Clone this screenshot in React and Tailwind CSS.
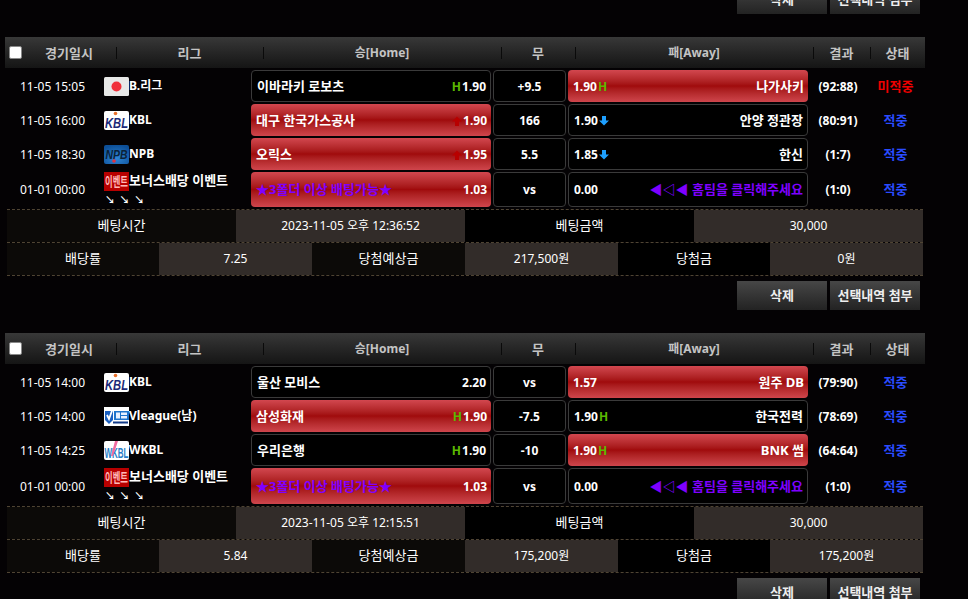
import React from "react";

const font = { fontFamily: '"Noto Sans", "Noto Sans CJK KR", sans-serif' };

const H = () => <span className="text-[#5cb800] font-bold text-[12px] leading-none">H</span>;

const Up = () => (
  <svg width="10" height="10" viewBox="0 0 10 10" className="inline-block">
    <path d="M5 0.5 L10 5.5 H7 V10 H3 V5.5 H0 Z" fill="#b80000" />
  </svg>
);

const Down = () => (
  <svg width="10" height="10" viewBox="0 0 10 10" className="inline-block">
    <path d="M5 9.5 L10 4.5 H7 V0 H3 V4.5 H0 Z" fill="#1ea0ff" />
  </svg>
);

// small league logos
const Logo = ({ type }) => {
  if (type === "jp")
    return (
      <svg width="25" height="19" viewBox="0 0 25 19" className="shrink-0">
        <rect width="25" height="19" rx="1.5" fill="#e8e8e8" />
        <circle cx="12.5" cy="9.5" r="5" fill="#f0303a" />
      </svg>
    );
  if (type === "kbl")
    return (
      <svg width="25" height="19" viewBox="0 0 25 19" className="shrink-0">
        <rect width="25" height="19" rx="2" fill="#fff" />
        <circle cx="11.5" cy="2.5" r="1.8" fill="#e8702a" />
        <text x="1" y="17" fontSize="15" fontWeight="700" fontStyle="italic" fill="#1c2a78" fontFamily="Liberation Sans" textLength="23" lengthAdjust="spacingAndGlyphs">KBL</text>
      </svg>
    );
  if (type === "npb")
    return (
      <svg width="25" height="19" viewBox="0 0 25 19" className="shrink-0">
        <defs>
          <radialGradient id="npbg" cx="0.5" cy="0.7" r="0.7">
            <stop offset="0" stopColor="#2f86d6" />
            <stop offset="1" stopColor="#0d4f98" />
          </radialGradient>
        </defs>
        <rect width="25" height="19" rx="2" fill="url(#npbg)" />
        <text x="1.5" y="13.5" fontSize="13" fontStyle="italic" fill="#0b2238" fontFamily="Liberation Sans" textLength="22" lengthAdjust="spacingAndGlyphs">NPB</text>
        <circle cx="10" cy="16" r="1.8" fill="#e03040" />
      </svg>
    );
  if (type === "event")
    return (
      <svg width="25" height="19" viewBox="0 0 25 19" className="shrink-0">
        <rect width="25" height="19" fill="#b80000" />
        <text x="1" y="14" fontSize="13" fontWeight="700" fill="#ffb8b8" fontFamily="Noto Sans CJK KR" textLength="23" lengthAdjust="spacingAndGlyphs">이벤트</text>
      </svg>
    );
  if (type === "vl")
    return (
      <svg width="25" height="19" viewBox="0 0 25 19" className="shrink-0">
        <rect width="25" height="19" fill="#fff" />
        <path d="M1 4 H9 V13 L5 17 L1 13 Z" fill="#1a5fc0" />
        <path d="M3 8 L5 12 L9 1" stroke="#fff" strokeWidth="1.8" fill="none" />
        <rect x="10" y="4" width="15" height="9" fill="#1f74cc" />
        <rect x="12" y="5.5" width="4" height="6" fill="#e8f0ff" />
        <rect x="17" y="5.5" width="6" height="2.5" fill="#e8f0ff" />
        <rect x="17" y="9" width="6" height="2.5" fill="#e8f0ff" />
        <rect x="9" y="14.5" width="15" height="2" fill="#123a88" />
      </svg>
    );
  return (
    <svg width="25" height="19" viewBox="0 0 25 19" className="shrink-0">
      <rect width="25" height="19" rx="2" fill="#fff" />
      <text x="0.5" y="17" fontSize="14" fontWeight="700" fill="#2a80c8" fontFamily="Liberation Sans" textLength="24" lengthAdjust="spacingAndGlyphs">WKBL</text>
      <path d="M11 0 L14 0 L9 15 L7 15 Z" fill="#f06aa0" />
    </svg>
  );
};

const Side = ({ on, className = "", children }) => (
  <div
    className={`flex items-center justify-between rounded-[4px] h-full pt-[1px] text-white text-[12px] font-bold ${className} ${
      on
        ? "bg-gradient-to-b from-[#d2474f] via-[#a00a0c] to-[#cf454c]"
        : "bg-black border border-[#3a3a3a]"
    }`}
  >
    {children}
  </div>
);

const Row = ({ r }) => (
  <div className={`flex text-white text-[12px] mb-[2px] ${r.tall ? "h-[36px]" : r.event ? "h-[35px]" : "h-[32px]"}`}>
    <div className="w-[95px] pt-[1px] flex items-center justify-center">{r.date}</div>
    <div className="w-[146px] ml-[4px] mr-[1px] relative">
      <div className={`flex items-start font-bold leading-[15px] ${r.event ? "pt-0" : "pt-[7px]"}`}>
        <Logo type={r.logo} />
        <span className={`whitespace-nowrap pt-[1px] ${r.event ? "text-[13px]" : ""}`}>{r.league}</span>
      </div>
      {r.event && <div className="text-[10px] font-bold leading-[12px] tracking-[1px] pl-[1px] mt-[3px]">↘ ↘ ↘</div>}
    </div>
    <div className="w-[240px]">
      <Side on={r.homeOn} className="pl-[5px] pr-[4px]">
        <span className={`text-[13px] ${r.event ? "text-[#7f00ff]" : ""}`}>{r.home}</span>
        <span className="flex items-center gap-[1px]">
          {r.homeMark === "H" && <H />}
          {r.homeMark === "up" && <Up />}
          {r.homeOdds}
        </span>
      </Side>
    </div>
    <div className="w-[73px] mx-[2px]">
      <Side className="justify-center">{r.mid}</Side>
    </div>
    <div className="w-[240px]">
      <Side on={r.awayOn} className="pl-[5px] pr-[4px]">
        <span className="flex items-center gap-[1px]">
          {r.awayOdds}
          {r.awayMark === "H" && <H />}
          {r.awayMark === "down" && <Down />}
        </span>
        <span className={`text-[13px] ${r.event ? "text-[#7f00ff]" : ""}`}>{r.away}</span>
      </Side>
    </div>
    <div className="w-[60px] pt-[1px] flex items-center justify-center font-bold">{r.result}</div>
    <div className={`w-[54px] pt-[1px] pl-[1px] flex items-center justify-center font-bold text-[13px] ${r.miss ? "text-[#f00000]" : "text-[#2a4cff]"}`}>
      {r.miss ? "미적중" : "적중"}
    </div>
  </div>
);

const Cell = ({ w, dark, black, label, children }) => (
  <div
    className={`flex items-center justify-center ${w} ${label ? "text-[13px]" : ""} ${
      black ? "bg-black" : dark ? "bg-[#322c29]" : "bg-[#0c0a08]"
    }`}
  >
    {children}
  </div>
);

const Buttons = () => (
  <div className="flex justify-end gap-[3px] pr-[5px]">
    {["삭제", "선택내역 첨부"].map((b) => (
      <button
        key={b}
        className="w-[90px] h-[29px] shrink-0 bg-gradient-to-b from-[#474747] to-[#232323] text-[#eee] text-[13px] font-bold"
      >
        {b}
      </button>
    ))}
  </div>
);

const Block = ({ b }) => (
  <div className="w-[920px] ml-[5px] mb-[23px]">
    {/* header */}
    <div className="flex h-[31px] items-center bg-gradient-to-b from-[#383838] to-[#151515] text-[#c4c4c4] text-[12px] font-bold">
      <input type="checkbox" className="ml-[4px] w-[13px] h-[13px] appearance-none bg-white border border-[#888] rounded-[2px]" />
      <div className="w-[94px] text-center text-[13px] leading-[16px]">경기일시</div>
      {[
        ["w-[147px] text-[13px]", "리그"],
        ["w-[238px]", "승[Home]"],
        ["w-[74px] text-[13px]", "무"],
        ["w-[238px]", "패[Away]"],
        ["w-[57px] text-[13px]", "결과"],
        ["w-[55px] text-[13px]", "상태"],
      ].map(([w, t]) => (
        <div key={t} className={`${w} text-center relative leading-[16px]`}>
          <span className="absolute left-0 top-[2px] h-[12px] w-px bg-[#0a0a0a]" />
          {t}
        </div>
      ))}
    </div>
    <div className="pt-[2px]">
      {b.rows.map((r, i) => (
        <Row key={i} r={r} />
      ))}
    </div>
    {/* summary */}
    <div className="mx-[2px] text-[12px] text-white">
      <div className="flex h-[33px] border-t border-dashed border-[#4f4433]">
        <Cell w="w-[229px]" label>베팅시간</Cell>
        <Cell w="w-[229px]" dark>{b.time}</Cell>
        <Cell w="w-[229px]" black label>베팅금액</Cell>
        <Cell w="w-[229px]" dark>30,000</Cell>
      </div>
      <div className="flex h-[34px] border-y border-dashed border-[#4f4433]">
        <Cell w="w-[152px]" label>배당률</Cell>
        <Cell w="w-[153px]" dark>{b.rate}</Cell>
        <Cell w="w-[153px]" label>당첨예상금</Cell>
        <Cell w="w-[153px]" dark>{b.expected}</Cell>
        <Cell w="w-[152px]" black label>당첨금</Cell>
        <Cell w="w-[153px]" dark>{b.won}</Cell>
      </div>
    </div>
    <div className="mt-[5px]">
      <Buttons />
    </div>
  </div>
);

const bonus = {
  date: "01-01 00:00",
  logo: "event",
  league: "보너스배당 이벤트",
  event: true,
  homeOn: true,
  home: "★3폴더 이상 배팅가능★",
  homeOdds: "1.03",
  mid: "vs",
  awayOdds: "0.00",
  away: "◀◁◀ 홈팀을 클릭해주세요",
  result: "(1:0)",
};

const blocks = [
  {
    time: "2023-11-05 오후 12:36:52",
    rate: "7.25",
    expected: "217,500원",
    won: "0원",
    rows: [
      { date: "11-05 15:05", logo: "jp", league: "B.리그", home: "이바라키 로보츠", homeMark: "H", homeOdds: "1.90", mid: "+9.5", awayOn: true, awayOdds: "1.90", awayMark: "H", away: "나가사키", result: "(92:88)", miss: true },
      { date: "11-05 16:00", logo: "kbl", league: "KBL", homeOn: true, home: "대구 한국가스공사", homeMark: "up", homeOdds: "1.90", mid: "166", awayOdds: "1.90", awayMark: "down", away: "안양 정관장", result: "(80:91)" },
      { date: "11-05 18:30", logo: "npb", league: "NPB", homeOn: true, home: "오릭스", homeMark: "up", homeOdds: "1.95", mid: "5.5", awayOdds: "1.85", awayMark: "down", away: "한신", result: "(1:7)" },
      bonus,
    ],
  },
  {
    time: "2023-11-05 오후 12:15:51",
    rate: "5.84",
    expected: "175,200원",
    won: "175,200원",
    rows: [
      { date: "11-05 14:00", logo: "kbl", league: "KBL", home: "울산 모비스", homeOdds: "2.20", mid: "vs", awayOn: true, awayOdds: "1.57", away: "원주 DB", result: "(79:90)" },
      { date: "11-05 14:00", logo: "vl", league: "Vleague(남)", homeOn: true, home: "삼성화재", homeMark: "H", homeOdds: "1.90", mid: "-7.5", awayOdds: "1.90", awayMark: "H", away: "한국전력", result: "(78:69)" },
      { date: "11-05 14:25", logo: "wkbl", league: "WKBL", home: "우리은행", homeMark: "H", homeOdds: "1.90", mid: "-10", awayOn: true, awayOdds: "1.90", awayMark: "H", away: "BNK 썸", result: "(64:64)" },
      { ...bonus, tall: true },
    ],
  },
];

export default function App() {
  return (
    <div className="h-[599px] overflow-hidden bg-[#040204]" style={font}>
      {/* tail of the previous bet, cut off by the scroll position */}
      <div className="w-[920px] ml-[5px] h-[14px] mb-[23px] overflow-hidden flex flex-col justify-end">
        <div className="shrink-0">
          <Buttons />
        </div>
      </div>
      {blocks.map((b, i) => (
        <Block key={i} b={b} />
      ))}
    </div>
  );
}
